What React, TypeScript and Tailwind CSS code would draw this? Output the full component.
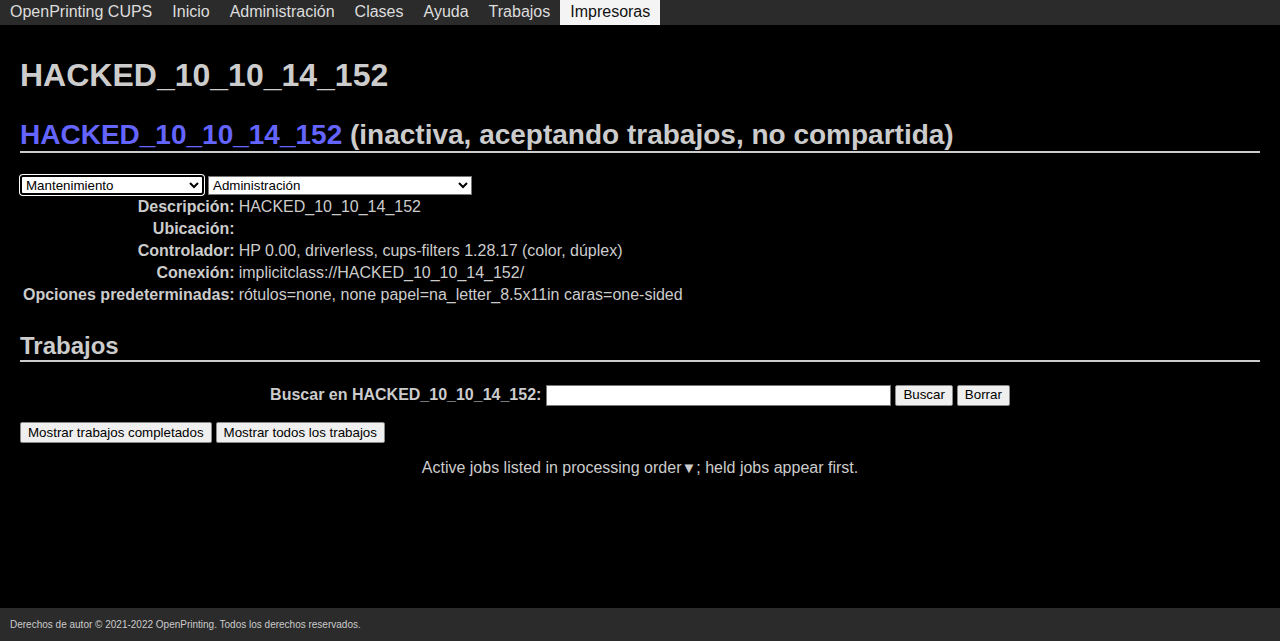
import React from "react";

const navItems = ["OpenPrinting CUPS", "Inicio", "Administración", "Clases", "Ayuda", "Trabajos", "Impresoras"];

const info: [string, string][] = [
  ["Descripción:", "HACKED_10_10_14_152"],
  ["Ubicación:", ""],
  ["Controlador:", "HP 0.00, driverless, cups-filters 1.28.17 (color, dúplex)"],
  ["Conexión:", "implicitclass://HACKED_10_10_14_152/"],
  ["Opciones predeterminadas:", "rótulos=none, none papel=na_letter_8.5x11in caras=one-sided"],
];

function Btn({ children }: { children: React.ReactNode }) {
  return (
    <button className="h-[21px] px-[7px] bg-[#efefef] border border-[#8a8a8a] rounded-[2px] text-[13.33px] leading-none text-black">
      {children}
    </button>
  );
}

export default function App() {
  return (
    <div
      className="h-screen flex flex-col bg-black text-[#cccccc] overflow-hidden"
      style={{ fontFamily: '"Liberation Sans", Arial, sans-serif' }}
    >
      {/* header */}
      <nav className="h-[25px] bg-[#2b2b2b] flex items-stretch text-[16px]">
        {navItems.map((item) => (
          <div
            key={item}
            className={`px-[10px] pb-[2px] flex items-center ${
              item === "Impresoras" ? "bg-[#f4f4f4] text-[#111]" : "text-[#dddddd]"
            }`}
          >
            {item}
          </div>
        ))}
      </nav>

      <main className="px-5">
        <h1 className="mt-[32px] text-[32px] leading-[37px] font-bold">HACKED_10_10_14_152</h1>

        <h2 className="mt-[25px] text-[28px] leading-[32px] font-bold border-b-2 border-[#cccccc]">
          <a className="text-[#6464ff]">HACKED_10_10_14_152</a> (inactiva, aceptando trabajos, no compartida)
        </h2>

        <div className="mt-[22px] flex gap-1 items-center">
          <select className="w-[184px] h-[20px] bg-white text-black text-[13.33px] border-2 border-black rounded-[3px] ring-1 ring-white">
            <option>Mantenimiento</option>
          </select>
          <select className="w-[264px] h-[19px] bg-white text-black text-[13.33px] border border-[#767676]">
            <option>Administración</option>
          </select>
        </div>

        <table className="border-separate border-spacing-[2px] text-[16px]">
          <tbody>
            {info.map(([label, value]) => (
              <tr key={label}>
                <th className="p-[1px] leading-[18px] text-right font-bold">{label}</th>
                <td className="p-[1px] leading-[18px]">{value}</td>
              </tr>
            ))}
          </tbody>
        </table>

        <h2 className="mt-[25px] text-[24px] leading-[28px] font-bold border-b-2 border-[#cccccc]">Trabajos</h2>

        <div className="mt-[21px] flex justify-center items-center gap-1 text-[16px]">
          <span className="font-bold mr-[1px]">Buscar en HACKED_10_10_14_152:</span>
          <input className="w-[345px] h-[21px] bg-white border border-[#767676] text-black" />
          <Btn>Buscar</Btn>
          <Btn>Borrar</Btn>
        </div>

        <div className="mt-[15px] flex gap-1">
          <Btn>Mostrar trabajos completados</Btn>
          <Btn>Mostrar todos los trabajos</Btn>
        </div>

        <p className="mt-[16px] text-center text-[16px] leading-[18px]">
          Active jobs listed in processing order<span className="text-[15px]">▼</span>; held jobs appear first.
        </p>
      </main>

      <footer className="mt-auto h-[33px] bg-[#2b2b2b] px-[10px] flex items-center text-[10px] text-[#cccccc]">
        Derechos de autor © 2021-2022 OpenPrinting. Todos los derechos reservados.
      </footer>
    </div>
  );
}
